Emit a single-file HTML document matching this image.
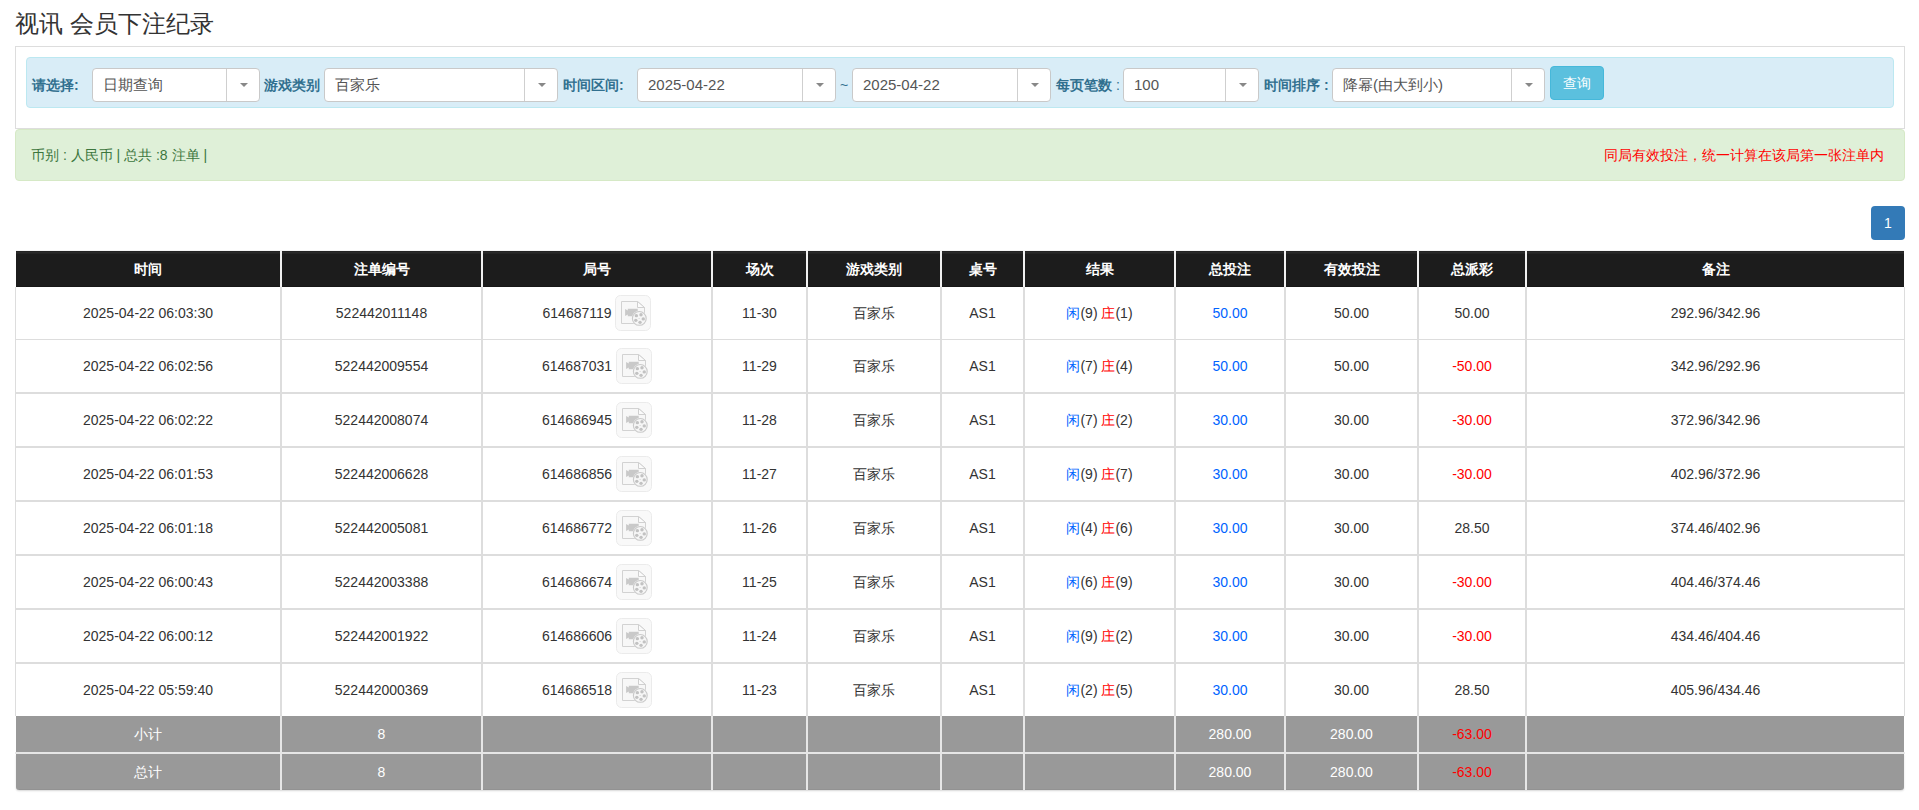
<!DOCTYPE html>
<html><head><meta charset="utf-8"><style>
*{margin:0;padding:0;box-sizing:border-box}
html,body{width:1919px;height:810px;overflow:hidden;background:#fff}
body{font-family:"Liberation Sans",sans-serif;font-size:14px;color:#333;position:relative}
.a{position:absolute}
h3{position:absolute;left:15px;top:7px;font-size:24px;font-weight:normal;color:#333;line-height:34px;white-space:nowrap}
.box{position:absolute;left:15px;top:46px;width:1890px;height:83px;border:1px solid #ddd;background:#fff}
.info{position:absolute;left:26px;top:57px;width:1868px;height:51px;border:1px solid #bce8f1;background:#d9edf7;border-radius:4px}
.lbl{position:absolute;top:76px;font-weight:bold;color:#31708f;font-size:14px;line-height:18px;white-space:nowrap}
.sel{position:absolute;top:68px;height:34px;background:#fff;border:1px solid #c9c9c9;border-radius:4px}
.st{position:absolute;left:10px;top:7px;line-height:18px;color:#555;font-size:15px;white-space:nowrap}
.dv{position:absolute;top:0;width:1px;height:32px;background:#cfcfcf}
.ar{position:absolute;top:14px;width:0;height:0;border-left:4px solid transparent;border-right:4px solid transparent;border-top:4px solid #888}
.btn{position:absolute;left:1550px;top:66px;width:54px;height:34px;background:#5bc0de;border:1px solid #46b8da;border-radius:4px;color:#fff;text-align:center;line-height:32px;font-size:14px}
.succ{position:absolute;left:15px;top:129px;width:1890px;height:52px;border:1px solid #d6e9c6;background:#dff0d8;border-radius:4px}
.sl{position:absolute;left:31px;top:146px;color:#3c763d;font-size:14px;line-height:18px;white-space:nowrap}
.sr{position:absolute;right:35px;top:146px;color:#f00;font-size:14px;line-height:18px;white-space:nowrap}
.pg{position:absolute;left:1871px;top:206px;width:34px;height:34px;background:#337ab7;border-radius:4px;color:#fff;text-align:center;line-height:34px;font-size:14px}
.c{position:absolute;text-align:center;white-space:nowrap;line-height:18px}
.hd{background:#1c1c1c}
.ft{background:#999}
.bl{color:#0064ff}
.rd{color:#f00}
</style></head><body>
<h3>视讯 会员下注纪录</h3>
<div class="box"></div>
<div class="info"></div>

<div class="lbl" style="left:32px">请选择:</div>
<div class="sel" style="left:92px;width:168px"><span class="st">日期查询</span><i class="dv" style="left:133px"></i><b class="ar" style="left:147px"></b></div>
<div class="lbl" style="left:264px">游戏类别</div>
<div class="sel" style="left:324px;width:234px"><span class="st">百家乐</span><i class="dv" style="left:199px"></i><b class="ar" style="left:213px"></b></div>
<div class="lbl" style="left:563px">时间区间:</div>
<div class="sel" style="left:637px;width:199px"><span class="st">2025-04-22</span><i class="dv" style="left:164px"></i><b class="ar" style="left:178px"></b></div>
<div class="lbl" style="left:840px;font-weight:normal">~</div>
<div class="sel" style="left:852px;width:199px"><span class="st">2025-04-22</span><i class="dv" style="left:164px"></i><b class="ar" style="left:178px"></b></div>
<div class="lbl" style="left:1056px">每页笔数<span style="font-weight:normal"> :</span></div>
<div class="sel" style="left:1123px;width:136px"><span class="st">100</span><i class="dv" style="left:101px"></i><b class="ar" style="left:115px"></b></div>
<div class="lbl" style="left:1264px">时间排序 :</div>
<div class="sel" style="left:1332px;width:213px"><span class="st">降幂(由大到小)</span><i class="dv" style="left:178px"></i><b class="ar" style="left:192px"></b></div>
<div class="btn">查询</div>
<div class="succ"></div><div class="sl">币别 : 人民币 | 总共 :8 注单 |</div><div class="sr">同局有效投注，统一计算在该局第一张注单内</div>
<div class="pg">1</div>
<div class="a" style="left:16px;top:251px;width:1888px;height:36px;background:#1c1c1c"></div>
<div class="a" style="left:16px;top:250px;width:1888px;height:1px;background:#f4f4f4"></div>
<div class="a" style="left:16px;top:251px;width:1888px;height:1px;background:#232323"></div>
<div class="a" style="left:16px;top:252px;width:1888px;height:1px;background:#2a2a2a"></div>
<div class="a" style="left:16px;top:253px;width:1888px;height:1px;background:#242424"></div>
<div class="a" style="left:16px;top:286px;width:1888px;height:1px;background:#171717"></div>
<div class="a" style="left:280px;top:251px;width:2px;height:36px;background:#f0f0f0"></div>
<div class="a" style="left:481px;top:251px;width:2px;height:36px;background:#f0f0f0"></div>
<div class="a" style="left:711px;top:251px;width:2px;height:36px;background:#f0f0f0"></div>
<div class="a" style="left:806px;top:251px;width:2px;height:36px;background:#f0f0f0"></div>
<div class="a" style="left:940px;top:251px;width:2px;height:36px;background:#f0f0f0"></div>
<div class="a" style="left:1023px;top:251px;width:2px;height:36px;background:#f0f0f0"></div>
<div class="a" style="left:1174px;top:251px;width:2px;height:36px;background:#f0f0f0"></div>
<div class="a" style="left:1284px;top:251px;width:2px;height:36px;background:#f0f0f0"></div>
<div class="a" style="left:1417px;top:251px;width:2px;height:36px;background:#f0f0f0"></div>
<div class="a" style="left:1525px;top:251px;width:2px;height:36px;background:#f0f0f0"></div>
<div class="c" style="left:15px;width:266px;top:260px;color:#fff;font-weight:bold">时间</div>
<div class="c" style="left:281px;width:201px;top:260px;color:#fff;font-weight:bold">注单编号</div>
<div class="c" style="left:482px;width:230px;top:260px;color:#fff;font-weight:bold">局号</div>
<div class="c" style="left:712px;width:95px;top:260px;color:#fff;font-weight:bold">场次</div>
<div class="c" style="left:807px;width:134px;top:260px;color:#fff;font-weight:bold">游戏类别</div>
<div class="c" style="left:941px;width:83px;top:260px;color:#fff;font-weight:bold">桌号</div>
<div class="c" style="left:1024px;width:151px;top:260px;color:#fff;font-weight:bold">结果</div>
<div class="c" style="left:1175px;width:110px;top:260px;color:#fff;font-weight:bold">总投注</div>
<div class="c" style="left:1285px;width:133px;top:260px;color:#fff;font-weight:bold">有效投注</div>
<div class="c" style="left:1418px;width:108px;top:260px;color:#fff;font-weight:bold">总派彩</div>
<div class="c" style="left:1526px;width:379px;top:260px;color:#fff;font-weight:bold">备注</div>
<div class="a" style="left:15px;top:287px;width:1px;height:429px;background:#ddd"></div>
<div class="a" style="left:1904px;top:287px;width:1px;height:429px;background:#ddd"></div>
<div class="a" style="left:280px;top:287px;width:2px;height:429px;background:#ddd"></div>
<div class="a" style="left:481px;top:287px;width:2px;height:429px;background:#ddd"></div>
<div class="a" style="left:711px;top:287px;width:2px;height:429px;background:#ddd"></div>
<div class="a" style="left:806px;top:287px;width:2px;height:429px;background:#ddd"></div>
<div class="a" style="left:940px;top:287px;width:2px;height:429px;background:#ddd"></div>
<div class="a" style="left:1023px;top:287px;width:2px;height:429px;background:#ddd"></div>
<div class="a" style="left:1174px;top:287px;width:2px;height:429px;background:#ddd"></div>
<div class="a" style="left:1284px;top:287px;width:2px;height:429px;background:#ddd"></div>
<div class="a" style="left:1417px;top:287px;width:2px;height:429px;background:#ddd"></div>
<div class="a" style="left:1525px;top:287px;width:2px;height:429px;background:#ddd"></div>
<div class="a" style="left:15px;top:339px;width:1890px;height:1px;background:#ddd"></div>
<div class="a" style="left:15px;top:392px;width:1890px;height:2px;background:#ddd"></div>
<div class="a" style="left:15px;top:446px;width:1890px;height:2px;background:#ddd"></div>
<div class="a" style="left:15px;top:500px;width:1890px;height:2px;background:#ddd"></div>
<div class="a" style="left:15px;top:554px;width:1890px;height:2px;background:#ddd"></div>
<div class="a" style="left:15px;top:608px;width:1890px;height:2px;background:#ddd"></div>
<div class="a" style="left:15px;top:662px;width:1890px;height:2px;background:#ddd"></div>
<div class="c" style="left:15px;width:266px;top:304px">2025-04-22 06:03:30</div>
<div class="c" style="left:281px;width:201px;top:304px">522442011148</div>
<div class="c" style="left:482px;width:230px;top:294px;line-height:36px;height:36px"><span style="vertical-align:middle">614687119</span> <span style="display:inline-block;width:36px;height:36px;vertical-align:middle"><svg width="36" height="36" viewBox="0 0 36 36" style="display:block"><rect x="0.5" y="0.5" width="35" height="35" rx="5" ry="5" fill="#f9f9f9" stroke="#ebebeb"/><path d="M6.5 6.5 H22.5 L29.5 12.5 V28.5 H6.5 Z" fill="#f7f7f7" stroke="#d2d2d2"/><path d="M22.5 6.5 V12.5 H29.5 Z" fill="#fbfbfb" stroke="#d0d0d0"/><path d="M10.1 14 L12.8 15.6 V13.8 H22.7 V21.2 H12.8 V19.4 L10.1 21 Z" fill="#c9c9c9"/><circle cx="24.3" cy="23.4" r="7.6" fill="#f8f8f8"/><circle cx="24.3" cy="23.4" r="6.9" fill="#f6f6f6" stroke="#cacaca" stroke-width="1.1"/><circle cx="21.37" cy="20.67" r="1.7" fill="#c2c2c2"/><circle cx="25.99" cy="19.77" r="1.7" fill="#c2c2c2"/><circle cx="28.27" cy="23.89" r="1.7" fill="#c2c2c2"/><circle cx="25.06" cy="27.33" r="1.7" fill="#c2c2c2"/><circle cx="20.8" cy="25.34" r="1.7" fill="#c2c2c2"/><circle cx="24.1" cy="23.5" r="0.6" fill="#d0d0d0"/></svg></span></div>
<div class="c" style="left:712px;width:95px;top:304px">11-30</div>
<div class="c" style="left:807px;width:134px;top:304px">百家乐</div>
<div class="c" style="left:941px;width:83px;top:304px">AS1</div>
<div class="c" style="left:1024px;width:151px;top:304px"><span class="bl">闲</span>(9) <span class="rd">庄</span>(1)</div>
<div class="c" style="left:1175px;width:110px;top:304px"><span class="bl">50.00</span></div>
<div class="c" style="left:1285px;width:133px;top:304px">50.00</div>
<div class="c" style="left:1418px;width:108px;top:304px">50.00</div>
<div class="c" style="left:1526px;width:379px;top:304px">292.96/342.96</div>
<div class="c" style="left:15px;width:266px;top:357px">2025-04-22 06:02:56</div>
<div class="c" style="left:281px;width:201px;top:357px">522442009554</div>
<div class="c" style="left:482px;width:230px;top:347px;line-height:36px;height:36px"><span style="vertical-align:middle">614687031</span> <span style="display:inline-block;width:36px;height:36px;vertical-align:middle"><svg width="36" height="36" viewBox="0 0 36 36" style="display:block"><rect x="0.5" y="0.5" width="35" height="35" rx="5" ry="5" fill="#f9f9f9" stroke="#ebebeb"/><path d="M6.5 6.5 H22.5 L29.5 12.5 V28.5 H6.5 Z" fill="#f7f7f7" stroke="#d2d2d2"/><path d="M22.5 6.5 V12.5 H29.5 Z" fill="#fbfbfb" stroke="#d0d0d0"/><path d="M10.1 14 L12.8 15.6 V13.8 H22.7 V21.2 H12.8 V19.4 L10.1 21 Z" fill="#c9c9c9"/><circle cx="24.3" cy="23.4" r="7.6" fill="#f8f8f8"/><circle cx="24.3" cy="23.4" r="6.9" fill="#f6f6f6" stroke="#cacaca" stroke-width="1.1"/><circle cx="21.37" cy="20.67" r="1.7" fill="#c2c2c2"/><circle cx="25.99" cy="19.77" r="1.7" fill="#c2c2c2"/><circle cx="28.27" cy="23.89" r="1.7" fill="#c2c2c2"/><circle cx="25.06" cy="27.33" r="1.7" fill="#c2c2c2"/><circle cx="20.8" cy="25.34" r="1.7" fill="#c2c2c2"/><circle cx="24.1" cy="23.5" r="0.6" fill="#d0d0d0"/></svg></span></div>
<div class="c" style="left:712px;width:95px;top:357px">11-29</div>
<div class="c" style="left:807px;width:134px;top:357px">百家乐</div>
<div class="c" style="left:941px;width:83px;top:357px">AS1</div>
<div class="c" style="left:1024px;width:151px;top:357px"><span class="bl">闲</span>(7) <span class="rd">庄</span>(4)</div>
<div class="c" style="left:1175px;width:110px;top:357px"><span class="bl">50.00</span></div>
<div class="c" style="left:1285px;width:133px;top:357px">50.00</div>
<div class="c" style="left:1418px;width:108px;top:357px"><span class="rd">-50.00</span></div>
<div class="c" style="left:1526px;width:379px;top:357px">342.96/292.96</div>
<div class="c" style="left:15px;width:266px;top:411px">2025-04-22 06:02:22</div>
<div class="c" style="left:281px;width:201px;top:411px">522442008074</div>
<div class="c" style="left:482px;width:230px;top:401px;line-height:36px;height:36px"><span style="vertical-align:middle">614686945</span> <span style="display:inline-block;width:36px;height:36px;vertical-align:middle"><svg width="36" height="36" viewBox="0 0 36 36" style="display:block"><rect x="0.5" y="0.5" width="35" height="35" rx="5" ry="5" fill="#f9f9f9" stroke="#ebebeb"/><path d="M6.5 6.5 H22.5 L29.5 12.5 V28.5 H6.5 Z" fill="#f7f7f7" stroke="#d2d2d2"/><path d="M22.5 6.5 V12.5 H29.5 Z" fill="#fbfbfb" stroke="#d0d0d0"/><path d="M10.1 14 L12.8 15.6 V13.8 H22.7 V21.2 H12.8 V19.4 L10.1 21 Z" fill="#c9c9c9"/><circle cx="24.3" cy="23.4" r="7.6" fill="#f8f8f8"/><circle cx="24.3" cy="23.4" r="6.9" fill="#f6f6f6" stroke="#cacaca" stroke-width="1.1"/><circle cx="21.37" cy="20.67" r="1.7" fill="#c2c2c2"/><circle cx="25.99" cy="19.77" r="1.7" fill="#c2c2c2"/><circle cx="28.27" cy="23.89" r="1.7" fill="#c2c2c2"/><circle cx="25.06" cy="27.33" r="1.7" fill="#c2c2c2"/><circle cx="20.8" cy="25.34" r="1.7" fill="#c2c2c2"/><circle cx="24.1" cy="23.5" r="0.6" fill="#d0d0d0"/></svg></span></div>
<div class="c" style="left:712px;width:95px;top:411px">11-28</div>
<div class="c" style="left:807px;width:134px;top:411px">百家乐</div>
<div class="c" style="left:941px;width:83px;top:411px">AS1</div>
<div class="c" style="left:1024px;width:151px;top:411px"><span class="bl">闲</span>(7) <span class="rd">庄</span>(2)</div>
<div class="c" style="left:1175px;width:110px;top:411px"><span class="bl">30.00</span></div>
<div class="c" style="left:1285px;width:133px;top:411px">30.00</div>
<div class="c" style="left:1418px;width:108px;top:411px"><span class="rd">-30.00</span></div>
<div class="c" style="left:1526px;width:379px;top:411px">372.96/342.96</div>
<div class="c" style="left:15px;width:266px;top:465px">2025-04-22 06:01:53</div>
<div class="c" style="left:281px;width:201px;top:465px">522442006628</div>
<div class="c" style="left:482px;width:230px;top:455px;line-height:36px;height:36px"><span style="vertical-align:middle">614686856</span> <span style="display:inline-block;width:36px;height:36px;vertical-align:middle"><svg width="36" height="36" viewBox="0 0 36 36" style="display:block"><rect x="0.5" y="0.5" width="35" height="35" rx="5" ry="5" fill="#f9f9f9" stroke="#ebebeb"/><path d="M6.5 6.5 H22.5 L29.5 12.5 V28.5 H6.5 Z" fill="#f7f7f7" stroke="#d2d2d2"/><path d="M22.5 6.5 V12.5 H29.5 Z" fill="#fbfbfb" stroke="#d0d0d0"/><path d="M10.1 14 L12.8 15.6 V13.8 H22.7 V21.2 H12.8 V19.4 L10.1 21 Z" fill="#c9c9c9"/><circle cx="24.3" cy="23.4" r="7.6" fill="#f8f8f8"/><circle cx="24.3" cy="23.4" r="6.9" fill="#f6f6f6" stroke="#cacaca" stroke-width="1.1"/><circle cx="21.37" cy="20.67" r="1.7" fill="#c2c2c2"/><circle cx="25.99" cy="19.77" r="1.7" fill="#c2c2c2"/><circle cx="28.27" cy="23.89" r="1.7" fill="#c2c2c2"/><circle cx="25.06" cy="27.33" r="1.7" fill="#c2c2c2"/><circle cx="20.8" cy="25.34" r="1.7" fill="#c2c2c2"/><circle cx="24.1" cy="23.5" r="0.6" fill="#d0d0d0"/></svg></span></div>
<div class="c" style="left:712px;width:95px;top:465px">11-27</div>
<div class="c" style="left:807px;width:134px;top:465px">百家乐</div>
<div class="c" style="left:941px;width:83px;top:465px">AS1</div>
<div class="c" style="left:1024px;width:151px;top:465px"><span class="bl">闲</span>(9) <span class="rd">庄</span>(7)</div>
<div class="c" style="left:1175px;width:110px;top:465px"><span class="bl">30.00</span></div>
<div class="c" style="left:1285px;width:133px;top:465px">30.00</div>
<div class="c" style="left:1418px;width:108px;top:465px"><span class="rd">-30.00</span></div>
<div class="c" style="left:1526px;width:379px;top:465px">402.96/372.96</div>
<div class="c" style="left:15px;width:266px;top:519px">2025-04-22 06:01:18</div>
<div class="c" style="left:281px;width:201px;top:519px">522442005081</div>
<div class="c" style="left:482px;width:230px;top:509px;line-height:36px;height:36px"><span style="vertical-align:middle">614686772</span> <span style="display:inline-block;width:36px;height:36px;vertical-align:middle"><svg width="36" height="36" viewBox="0 0 36 36" style="display:block"><rect x="0.5" y="0.5" width="35" height="35" rx="5" ry="5" fill="#f9f9f9" stroke="#ebebeb"/><path d="M6.5 6.5 H22.5 L29.5 12.5 V28.5 H6.5 Z" fill="#f7f7f7" stroke="#d2d2d2"/><path d="M22.5 6.5 V12.5 H29.5 Z" fill="#fbfbfb" stroke="#d0d0d0"/><path d="M10.1 14 L12.8 15.6 V13.8 H22.7 V21.2 H12.8 V19.4 L10.1 21 Z" fill="#c9c9c9"/><circle cx="24.3" cy="23.4" r="7.6" fill="#f8f8f8"/><circle cx="24.3" cy="23.4" r="6.9" fill="#f6f6f6" stroke="#cacaca" stroke-width="1.1"/><circle cx="21.37" cy="20.67" r="1.7" fill="#c2c2c2"/><circle cx="25.99" cy="19.77" r="1.7" fill="#c2c2c2"/><circle cx="28.27" cy="23.89" r="1.7" fill="#c2c2c2"/><circle cx="25.06" cy="27.33" r="1.7" fill="#c2c2c2"/><circle cx="20.8" cy="25.34" r="1.7" fill="#c2c2c2"/><circle cx="24.1" cy="23.5" r="0.6" fill="#d0d0d0"/></svg></span></div>
<div class="c" style="left:712px;width:95px;top:519px">11-26</div>
<div class="c" style="left:807px;width:134px;top:519px">百家乐</div>
<div class="c" style="left:941px;width:83px;top:519px">AS1</div>
<div class="c" style="left:1024px;width:151px;top:519px"><span class="bl">闲</span>(4) <span class="rd">庄</span>(6)</div>
<div class="c" style="left:1175px;width:110px;top:519px"><span class="bl">30.00</span></div>
<div class="c" style="left:1285px;width:133px;top:519px">30.00</div>
<div class="c" style="left:1418px;width:108px;top:519px">28.50</div>
<div class="c" style="left:1526px;width:379px;top:519px">374.46/402.96</div>
<div class="c" style="left:15px;width:266px;top:573px">2025-04-22 06:00:43</div>
<div class="c" style="left:281px;width:201px;top:573px">522442003388</div>
<div class="c" style="left:482px;width:230px;top:563px;line-height:36px;height:36px"><span style="vertical-align:middle">614686674</span> <span style="display:inline-block;width:36px;height:36px;vertical-align:middle"><svg width="36" height="36" viewBox="0 0 36 36" style="display:block"><rect x="0.5" y="0.5" width="35" height="35" rx="5" ry="5" fill="#f9f9f9" stroke="#ebebeb"/><path d="M6.5 6.5 H22.5 L29.5 12.5 V28.5 H6.5 Z" fill="#f7f7f7" stroke="#d2d2d2"/><path d="M22.5 6.5 V12.5 H29.5 Z" fill="#fbfbfb" stroke="#d0d0d0"/><path d="M10.1 14 L12.8 15.6 V13.8 H22.7 V21.2 H12.8 V19.4 L10.1 21 Z" fill="#c9c9c9"/><circle cx="24.3" cy="23.4" r="7.6" fill="#f8f8f8"/><circle cx="24.3" cy="23.4" r="6.9" fill="#f6f6f6" stroke="#cacaca" stroke-width="1.1"/><circle cx="21.37" cy="20.67" r="1.7" fill="#c2c2c2"/><circle cx="25.99" cy="19.77" r="1.7" fill="#c2c2c2"/><circle cx="28.27" cy="23.89" r="1.7" fill="#c2c2c2"/><circle cx="25.06" cy="27.33" r="1.7" fill="#c2c2c2"/><circle cx="20.8" cy="25.34" r="1.7" fill="#c2c2c2"/><circle cx="24.1" cy="23.5" r="0.6" fill="#d0d0d0"/></svg></span></div>
<div class="c" style="left:712px;width:95px;top:573px">11-25</div>
<div class="c" style="left:807px;width:134px;top:573px">百家乐</div>
<div class="c" style="left:941px;width:83px;top:573px">AS1</div>
<div class="c" style="left:1024px;width:151px;top:573px"><span class="bl">闲</span>(6) <span class="rd">庄</span>(9)</div>
<div class="c" style="left:1175px;width:110px;top:573px"><span class="bl">30.00</span></div>
<div class="c" style="left:1285px;width:133px;top:573px">30.00</div>
<div class="c" style="left:1418px;width:108px;top:573px"><span class="rd">-30.00</span></div>
<div class="c" style="left:1526px;width:379px;top:573px">404.46/374.46</div>
<div class="c" style="left:15px;width:266px;top:627px">2025-04-22 06:00:12</div>
<div class="c" style="left:281px;width:201px;top:627px">522442001922</div>
<div class="c" style="left:482px;width:230px;top:617px;line-height:36px;height:36px"><span style="vertical-align:middle">614686606</span> <span style="display:inline-block;width:36px;height:36px;vertical-align:middle"><svg width="36" height="36" viewBox="0 0 36 36" style="display:block"><rect x="0.5" y="0.5" width="35" height="35" rx="5" ry="5" fill="#f9f9f9" stroke="#ebebeb"/><path d="M6.5 6.5 H22.5 L29.5 12.5 V28.5 H6.5 Z" fill="#f7f7f7" stroke="#d2d2d2"/><path d="M22.5 6.5 V12.5 H29.5 Z" fill="#fbfbfb" stroke="#d0d0d0"/><path d="M10.1 14 L12.8 15.6 V13.8 H22.7 V21.2 H12.8 V19.4 L10.1 21 Z" fill="#c9c9c9"/><circle cx="24.3" cy="23.4" r="7.6" fill="#f8f8f8"/><circle cx="24.3" cy="23.4" r="6.9" fill="#f6f6f6" stroke="#cacaca" stroke-width="1.1"/><circle cx="21.37" cy="20.67" r="1.7" fill="#c2c2c2"/><circle cx="25.99" cy="19.77" r="1.7" fill="#c2c2c2"/><circle cx="28.27" cy="23.89" r="1.7" fill="#c2c2c2"/><circle cx="25.06" cy="27.33" r="1.7" fill="#c2c2c2"/><circle cx="20.8" cy="25.34" r="1.7" fill="#c2c2c2"/><circle cx="24.1" cy="23.5" r="0.6" fill="#d0d0d0"/></svg></span></div>
<div class="c" style="left:712px;width:95px;top:627px">11-24</div>
<div class="c" style="left:807px;width:134px;top:627px">百家乐</div>
<div class="c" style="left:941px;width:83px;top:627px">AS1</div>
<div class="c" style="left:1024px;width:151px;top:627px"><span class="bl">闲</span>(9) <span class="rd">庄</span>(2)</div>
<div class="c" style="left:1175px;width:110px;top:627px"><span class="bl">30.00</span></div>
<div class="c" style="left:1285px;width:133px;top:627px">30.00</div>
<div class="c" style="left:1418px;width:108px;top:627px"><span class="rd">-30.00</span></div>
<div class="c" style="left:1526px;width:379px;top:627px">434.46/404.46</div>
<div class="c" style="left:15px;width:266px;top:681px">2025-04-22 05:59:40</div>
<div class="c" style="left:281px;width:201px;top:681px">522442000369</div>
<div class="c" style="left:482px;width:230px;top:671px;line-height:36px;height:36px"><span style="vertical-align:middle">614686518</span> <span style="display:inline-block;width:36px;height:36px;vertical-align:middle"><svg width="36" height="36" viewBox="0 0 36 36" style="display:block"><rect x="0.5" y="0.5" width="35" height="35" rx="5" ry="5" fill="#f9f9f9" stroke="#ebebeb"/><path d="M6.5 6.5 H22.5 L29.5 12.5 V28.5 H6.5 Z" fill="#f7f7f7" stroke="#d2d2d2"/><path d="M22.5 6.5 V12.5 H29.5 Z" fill="#fbfbfb" stroke="#d0d0d0"/><path d="M10.1 14 L12.8 15.6 V13.8 H22.7 V21.2 H12.8 V19.4 L10.1 21 Z" fill="#c9c9c9"/><circle cx="24.3" cy="23.4" r="7.6" fill="#f8f8f8"/><circle cx="24.3" cy="23.4" r="6.9" fill="#f6f6f6" stroke="#cacaca" stroke-width="1.1"/><circle cx="21.37" cy="20.67" r="1.7" fill="#c2c2c2"/><circle cx="25.99" cy="19.77" r="1.7" fill="#c2c2c2"/><circle cx="28.27" cy="23.89" r="1.7" fill="#c2c2c2"/><circle cx="25.06" cy="27.33" r="1.7" fill="#c2c2c2"/><circle cx="20.8" cy="25.34" r="1.7" fill="#c2c2c2"/><circle cx="24.1" cy="23.5" r="0.6" fill="#d0d0d0"/></svg></span></div>
<div class="c" style="left:712px;width:95px;top:681px">11-23</div>
<div class="c" style="left:807px;width:134px;top:681px">百家乐</div>
<div class="c" style="left:941px;width:83px;top:681px">AS1</div>
<div class="c" style="left:1024px;width:151px;top:681px"><span class="bl">闲</span>(2) <span class="rd">庄</span>(5)</div>
<div class="c" style="left:1175px;width:110px;top:681px"><span class="bl">30.00</span></div>
<div class="c" style="left:1285px;width:133px;top:681px">30.00</div>
<div class="c" style="left:1418px;width:108px;top:681px">28.50</div>
<div class="c" style="left:1526px;width:379px;top:681px">405.96/434.46</div>
<div class="a" style="left:16px;top:716px;width:1888px;height:36px;background:#999"></div>
<div class="c" style="left:15px;width:266px;top:725px;color:#fff"><span class="">小计</span></div>
<div class="c" style="left:281px;width:201px;top:725px;color:#fff"><span class="">8</span></div>
<div class="c" style="left:1175px;width:110px;top:725px;color:#fff"><span class="">280.00</span></div>
<div class="c" style="left:1285px;width:133px;top:725px;color:#fff"><span class="">280.00</span></div>
<div class="c" style="left:1418px;width:108px;top:725px;color:#fff"><span class="rd">-63.00</span></div>
<div class="a" style="left:16px;top:754px;width:1888px;height:36px;background:#999;border-radius:0 0 3px 3px;box-shadow:0 1px 2px rgba(0,0,0,0.16)"></div>
<div class="c" style="left:15px;width:266px;top:763px;color:#fff"><span class="">总计</span></div>
<div class="c" style="left:281px;width:201px;top:763px;color:#fff"><span class="">8</span></div>
<div class="c" style="left:1175px;width:110px;top:763px;color:#fff"><span class="">280.00</span></div>
<div class="c" style="left:1285px;width:133px;top:763px;color:#fff"><span class="">280.00</span></div>
<div class="c" style="left:1418px;width:108px;top:763px;color:#fff"><span class="rd">-63.00</span></div>
<div class="a" style="left:15px;top:752px;width:1890px;height:2px;background:#e6e6e6"></div>
<div class="a" style="left:19px;top:789px;width:1882px;height:1px;background:#929292"></div>
<div class="a" style="left:280px;top:716px;width:2px;height:74px;background:#e6e6e6"></div>
<div class="a" style="left:481px;top:716px;width:2px;height:74px;background:#e6e6e6"></div>
<div class="a" style="left:711px;top:716px;width:2px;height:74px;background:#e6e6e6"></div>
<div class="a" style="left:806px;top:716px;width:2px;height:74px;background:#e6e6e6"></div>
<div class="a" style="left:940px;top:716px;width:2px;height:74px;background:#e6e6e6"></div>
<div class="a" style="left:1023px;top:716px;width:2px;height:74px;background:#e6e6e6"></div>
<div class="a" style="left:1174px;top:716px;width:2px;height:74px;background:#e6e6e6"></div>
<div class="a" style="left:1284px;top:716px;width:2px;height:74px;background:#e6e6e6"></div>
<div class="a" style="left:1417px;top:716px;width:2px;height:74px;background:#e6e6e6"></div>
<div class="a" style="left:1525px;top:716px;width:2px;height:74px;background:#e6e6e6"></div>
</body></html>
